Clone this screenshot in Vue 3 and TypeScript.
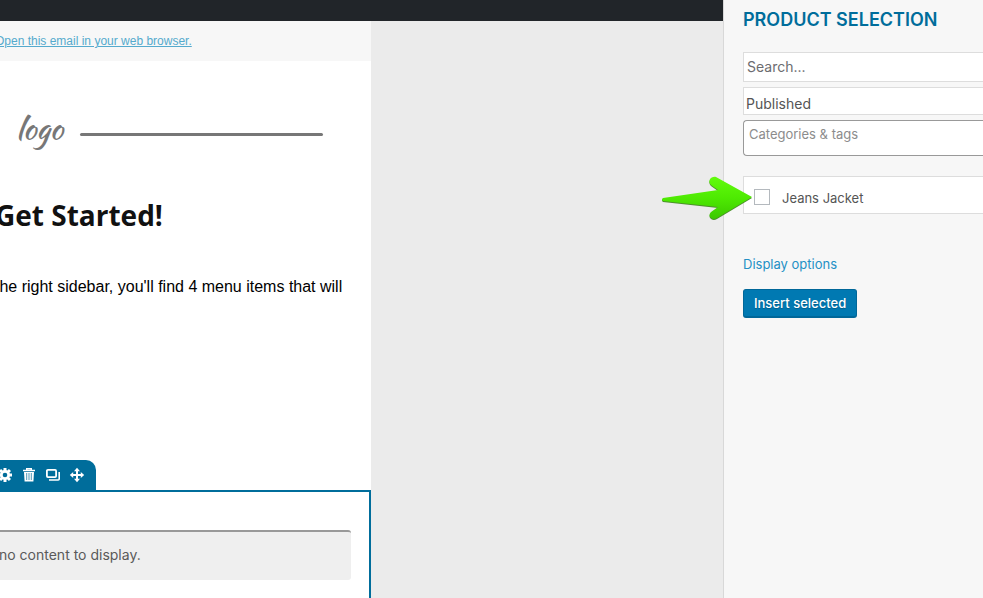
<script setup lang="ts">
import { ref } from 'vue'

const search = ref('')
const status = ref('published')
const terms = ref('')
const products = ref([{ id: 1, name: 'Jeans Jacket', selected: false }])
</script>

<template>
  <div class="editor">
    <main class="canvas">
      <div class="admin-bar"></div>
      <article class="mail">
        <div class="preheader">
          <a href="#browser">Open this email in your web browser.</a>
        </div>
        <div class="masthead">
          <i class="dot"></i>
          <span class="logo">logo</span>
          <i class="rule"></i>
        </div>
        <div class="copy">
          <h1>Get Started!</h1>
          <p>the right sidebar, you'll find 4 menu items that will</p>
        </div>
        <div class="tools">
          <button type="button" aria-label="Settings">
            <svg viewBox="0 0 16 16">
              <g fill="#fff">
                <circle cx="8" cy="8" r="5" />
                <path d="M6.5 1h3v14h-3zM1 6.5h14v3H1z" />
                <path d="M6.5 1h3v14h-3zM1 6.5h14v3H1z" transform="rotate(45 8 8)" />
              </g>
              <circle cx="8" cy="8" r="2.3" fill="#006d9b" />
            </svg>
          </button>
          <button type="button" aria-label="Delete">
            <svg viewBox="0 0 16 16">
              <path d="M2 3.5h12M5.7 3V1.8h4.6V3" fill="none" stroke="#fff" stroke-width="1.4" />
              <path d="M3 5h10l-.6 9.5H3.6z" fill="#fff" />
              <path d="M5.7 6v7M8 6v7M10.3 6v7" stroke="#006d9b" stroke-width=".7" />
            </svg>
          </button>
          <button type="button" aria-label="Duplicate">
            <svg viewBox="0 0 16 16" fill="none" stroke="#fff">
              <rect x="1.9" y="2.9" width="9.2" height="7.2" rx="1" stroke-width="1.8" />
              <path d="M4 13h9.2q1 0 1-1V5" stroke-width="1.6" />
            </svg>
          </button>
          <button type="button" aria-label="Move">
            <svg viewBox="0 0 16 16">
              <path d="M8 3v10M3 8h10" stroke="#fff" stroke-width="2" />
              <path d="M8 .8l3 3.4H5zM8 15.2l3-3.4H5zM.8 8l3.4-3v6zM15.2 8l-3.4-3v6z" fill="#fff" />
            </svg>
          </button>
        </div>
        <section class="block">
          <p class="notice">no content to display.</p>
        </section>
      </article>
    </main>

    <aside class="sidebar">
      <h2>PRODUCT SELECTION</h2>
      <form @submit.prevent>
        <input v-model="search" class="search" type="text" placeholder="Search..." aria-label="Search" />
        <select v-model="status" class="status" aria-label="Status">
          <option value="published">Published</option>
        </select>
        <input v-model="terms" class="terms" type="text" placeholder="Categories &amp; tags" aria-label="Categories and tags" />
        <ul class="products">
          <li v-for="product in products" :key="product.id">
            <label>
              <input v-model="product.selected" type="checkbox" />
              <span>{{ product.name }}</span>
            </label>
            <svg class="pointer" viewBox="0 0 92 46" aria-hidden="true">
              <defs>
                <linearGradient id="pointer-fill" x1="0" y1="0" x2="0" y2="1">
                  <stop offset="0" stop-color="#62fb0c" />
                  <stop offset=".5" stop-color="#4eea02" />
                  <stop offset="1" stop-color="#3cc800" />
                </linearGradient>
              </defs>
              <path
                class="pointer-shade"
                d="M1 22L56 14L49 9C45 5 49 0 54 1L90 21L55 42C50 45 45 40 49 36L56 31L1 25Q-1 23.500 1 22Z"
                transform="translate(0 1)"
              />
              <path
                d="M1 22L56 14L49 9C45 5 49 0 54 1L90 21L55 42C50 45 45 40 49 36L56 31L1 25Q-1 23.500 1 22Z"
                fill="url(#pointer-fill)"
              />
            </svg>
          </li>
        </ul>
        <a class="options" href="#display">Display options</a>
        <button class="insert" type="submit">Insert selected</button>
      </form>
    </aside>
  </div>
</template>

<style>
body {
  margin: 0;
  overflow-x: hidden;
}
</style>

<style scoped>
* {
  box-sizing: border-box;
}

.editor {
  display: flex;
  min-height: 100vh;
  background: #ebebeb;
  font-family: Inter, 'Liberation Sans', sans-serif;
}

.canvas {
  display: flex;
  flex: 1;
  flex-direction: column;
  min-width: 0;
  overflow: hidden;
}

.admin-bar {
  height: 21px;
  background: #212529;
}

.mail {
  display: flex;
  flex: 1;
  flex-direction: column;
  width: 52%;
  margin-left: -5px;
  background: #fff;
  font-family: 'Liberation Sans', Arial, sans-serif;
}

.preheader {
  height: 40px;
  background: #f7f7f7;
  font-size: 12px;
  line-height: 40px;
  white-space: nowrap;
}

.preheader a {
  color: #55aacd;
}

.masthead {
  display: flex;
  align-items: center;
  height: 146px;
  padding-right: 48px;
}

.dot {
  width: 5px;
  height: 3px;
  border-radius: 2px;
  background: #aaa;
}

.logo {
  width: 64px;
  margin: 0 16px 12px 0;
  padding-left: 16px;
  color: #777;
  font-family: 'Kaushan Script', cursive;
  font-size: 30px;
  line-height: 40px;
}

.rule {
  flex: 1;
  height: 3px;
  border-radius: 2px;
  background: #777;
}

.copy {
  height: 253px;
  white-space: nowrap;
}

h1 {
  margin: -12px 0 0;
  color: #111;
  font-family: 'Trebuchet MS', 'Open Sans', sans-serif;
  font-size: 28px;
  font-weight: 700;
  line-height: 40px;
}

.copy p {
  margin: 40px 0 0;
  color: #000;
  font-size: 16px;
  line-height: 24px;
}

.tools {
  display: flex;
  gap: 8px;
  align-items: center;
  align-self: flex-start;
  height: 30px;
  padding-right: 11px;
  border-radius: 0 10px 0 0;
  background: #006d9b;
}

.tools button {
  width: 16px;
  height: 16px;
  padding: 0;
  border: 0;
  background: none;
}

.tools button:first-child {
  margin-left: 2px;
}

.tools svg {
  display: block;
}

.block {
  flex: 1;
  padding: 38px 18px 18px 0;
  border: 2px solid #006d9b;
  border-width: 2px 2px 0 0;
}

.notice {
  margin: 0;
  padding: 11px 4px 13px;
  border-top: 2px solid #999;
  border-radius: 3px;
  background: #efefef;
  color: #5a5a5a;
  font-family: Inter, sans-serif;
  font-size: 14px;
  line-height: 24px;
}

.sidebar {
  width: 260px;
  padding: 8px 0 20px 19px;
  border-left: 1px solid #d8d8d8;
  background: #f7f7f7;
}

h2 {
  margin: 0 0 20px;
  color: #006d9b;
  font-size: 18px;
  font-weight: 600;
  line-height: 24px;
  white-space: nowrap;
}

form {
  display: flex;
  flex-direction: column;
  align-items: stretch;
}

.search,
.status,
.terms {
  margin: 0;
  border: 1px solid #ddd;
  border-right: 0;
  border-radius: 0;
  outline: 0;
  background: #fff;
  color: #555;
  font-family: inherit;
  font-size: 14px;
  appearance: none;
}

.search {
  height: 30px;
  padding: 0 3px 2px;
}

.search::placeholder {
  color: #6c6c70;
}

.status {
  height: 28px;
  margin: 5px 0;
  padding: 5px 2px 0;
}

.terms {
  height: 36px;
  padding: 0 5px 8px;
  border-color: #999;
  border-radius: 4px 0 0 4px;
  font-size: 13px;
}

.terms::placeholder {
  color: #8c8c8c;
}

.products {
  margin: 20px 0 40px;
  padding: 0;
  list-style: none;
}

.products li {
  position: relative;
  height: 38px;
  border: 1px solid #ddd;
  border-right: 0;
  background: #fff;
}

.products label {
  display: flex;
  gap: 12px;
  align-items: center;
  height: 100%;
  padding: 6px 10px 0;
  color: #555;
  font-size: 13px;
}

.products input {
  width: 16px;
  height: 16px;
  margin: 0 0 2px;
  border: 1px solid #b4b9be;
  background: #fff;
  appearance: none;
}

.products input:checked {
  background: #0079b2;
}

.pointer {
  position: absolute;
  top: -1px;
  left: -82px;
  width: 92px;
  height: 46px;
  overflow: visible;
  pointer-events: none;
}

.pointer-shade {
  fill: #4c8f2c;
}

.options {
  align-self: flex-start;
  color: #2490c5;
  font-size: 13px;
  line-height: 20px;
  text-decoration: none;
}

.insert {
  align-self: flex-start;
  height: 29px;
  margin-top: 15px;
  padding: 0 10px;
  border: 1px solid #006799;
  border-bottom-width: 2px;
  border-radius: 3px;
  background: #0079b2;
  color: #fff;
  font-family: inherit;
  font-size: 13px;
  font-weight: 500;
  text-shadow: 0 1px 1px #005d8a;
}
</style>
